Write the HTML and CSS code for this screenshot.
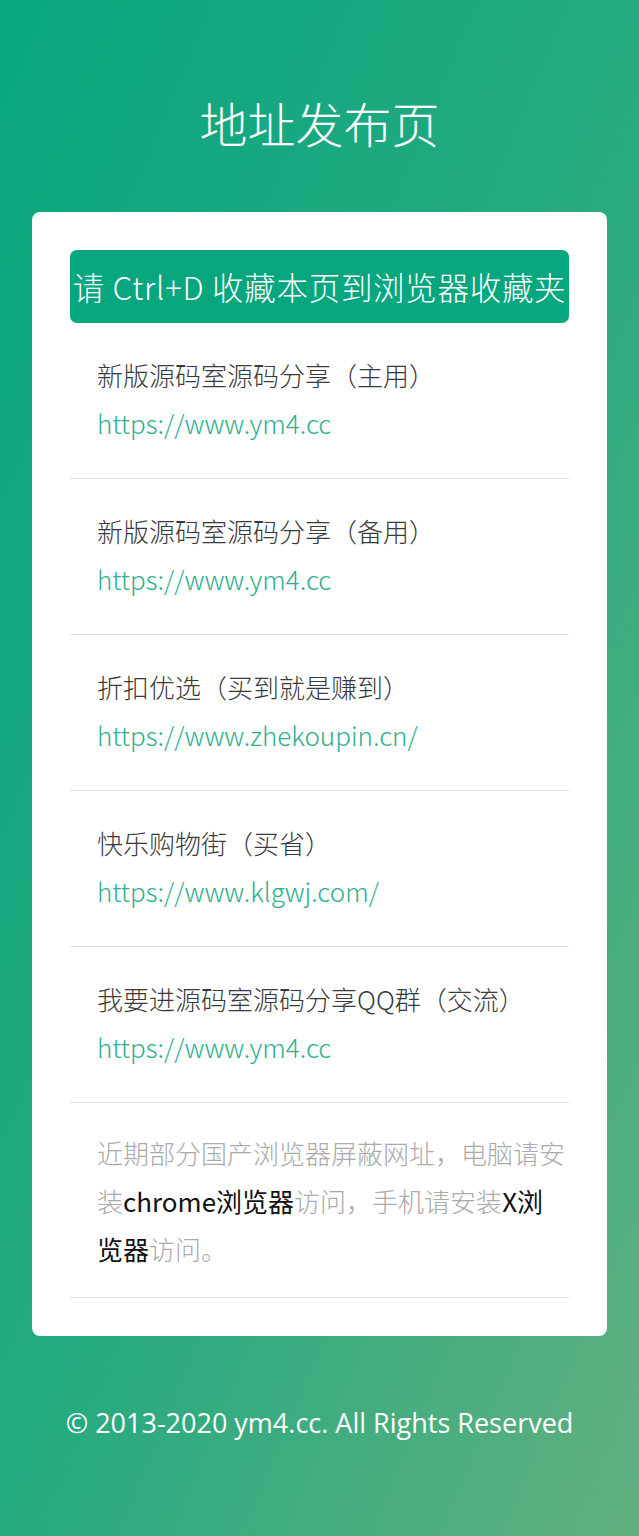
FILE: index.html
```html
<!DOCTYPE html>
<html lang="zh-CN">
<head>
<meta charset="UTF-8">
<meta name="viewport" content="width=device-width, initial-scale=1.0">
<title>地址发布页</title>
<link rel="stylesheet" href="styles.css">
</head>
<body>
    <h1 class="title">地址发布页</h1>
    <div class="box">
        <div class="tip">请 Ctrl+D 收藏本页到浏览器收藏夹</div>
        <ul class="list">
            <li>
                <p class="name">新版源码室源码分享（主用）</p>
                <a href="#">https://www.ym4.cc</a>
            </li>
            <li>
                <p class="name">新版源码室源码分享（备用）</p>
                <a href="#">https://www.ym4.cc</a>
            </li>
            <li>
                <p class="name">折扣优选（买到就是赚到）</p>
                <a href="#">https://www.zhekoupin.cn/</a>
            </li>
            <li>
                <p class="name">快乐购物街（买省）</p>
                <a href="#">https://www.klgwj.com/</a>
            </li>
            <li>
                <p class="name">我要进源码室源码分享QQ群（交流）</p>
                <a href="#">https://www.ym4.cc</a>
            </li>
            <li class="notice">
                近期部分国产浏览器屏蔽网址，电脑请安装<b>chrome浏览器</b>访问，手机请安装<b>X浏览器</b>访问。
            </li>
        </ul>
    </div>
    <div class="footer">© 2013-2020 ym4.cc. All Rights Reserved</div>
</body>
</html>
```

FILE: styles.css
```css
*{margin:0;padding:0;box-sizing:border-box}
html{background:#2aab80}
body{min-height:1536px;font-family:"Noto Sans CJK SC",sans-serif;background:linear-gradient(to bottom right,#08a67e 0%,#25aa80 50%,#62b07f 100%);padding:88px 32px 0;color:#333}
ul,li{list-style:none}
a{text-decoration:none}
.title{font-size:48px;font-weight:300;color:#fff;text-align:center;line-height:68px}
.box{margin-top:56px;background:#fff;border-radius:8px;padding:38px}
.tip{background:#06a67f;color:#fff;border-radius:7px;height:73px;line-height:73px;font-size:31.5px;font-weight:300;text-align:center;white-space:nowrap;overflow:hidden;letter-spacing:0.7px}
.list li{padding:28px 0 31px 27px;border-bottom:1px solid #e0e0e0;font-size:26px;line-height:48px}
.list .name{color:#3a3a3a;font-weight:300}
.list a{color:#2bb08e;font-weight:300}
.list .notice{color:#aaa;padding:26px 0 24px 27px;font-weight:300}
.notice b{color:#111;font-weight:400}
.footer{color:#fff;text-align:center;font-size:27px;padding-top:68px;font-family:"Open Sans","Noto Sans",sans-serif}
```
